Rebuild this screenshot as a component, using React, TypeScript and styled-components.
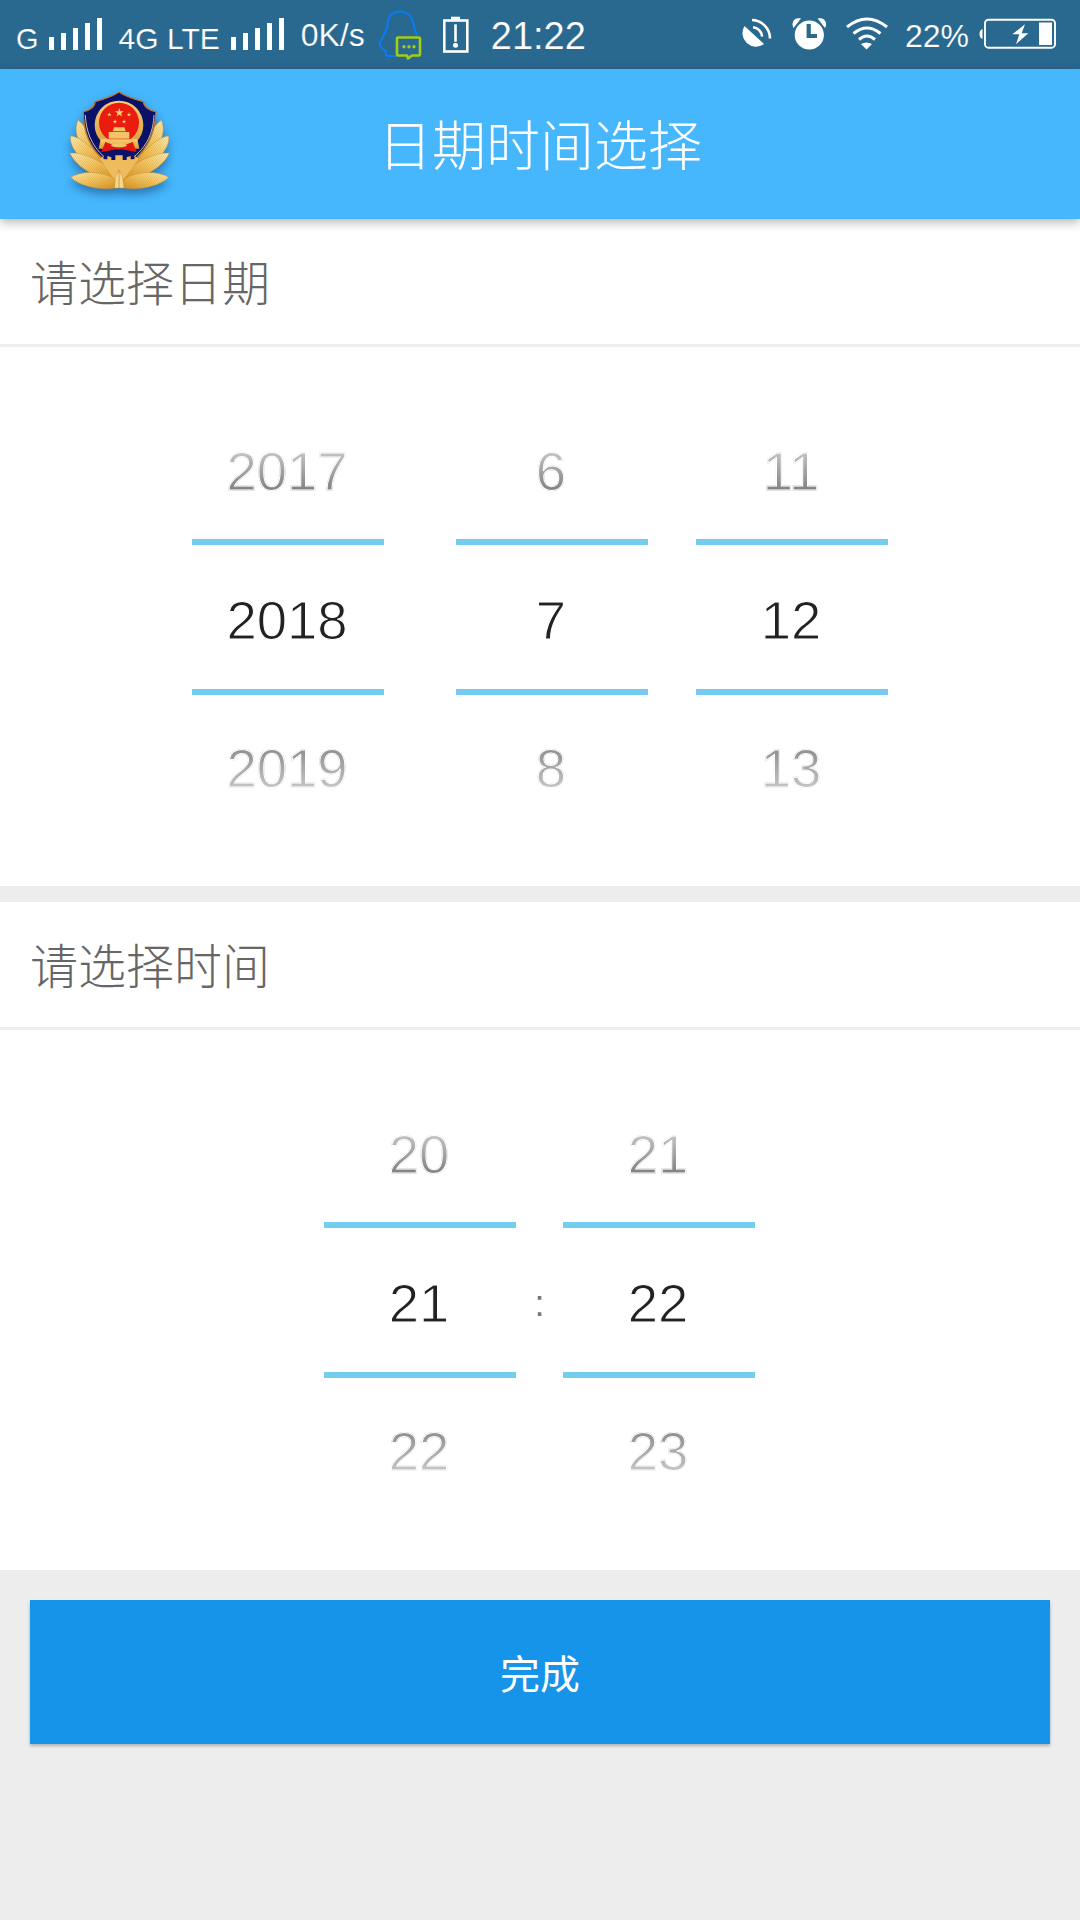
import React from "react";
import styled, { createGlobalStyle } from "styled-components";

const Global = createGlobalStyle`
  html, body { margin: 0; padding: 0; background: #ededed; }
  * { box-sizing: border-box; }
`;

const CJK = `"Noto Sans CJK SC", sans-serif`;
const BAR = "#29688f";

const Page = styled.div`
  width: 1080px;
  height: 1920px;
  background: #ededed;
  font-family: "Liberation Sans", "Noto Sans CJK SC", sans-serif;
  display: flex;
  flex-direction: column;
  overflow: hidden;
`;

const StatusBar = styled.div`
  height: 69px;
  background: ${BAR};
  color: #fff;
  display: flex;
  align-items: center;
  padding: 0 24px 0 16px;
`;

const StatusText = styled.span<{ $size: number; $left: number; $top: number }>`
  font-size: ${(p) => p.$size}px;
  margin-left: ${(p) => p.$left}px;
  margin-top: ${(p) => p.$top}px;
  line-height: 1;
  white-space: nowrap;
  -webkit-text-stroke: 0.2px ${BAR};
`;

const StatusIcon = styled.svg<{ $left: number; $auto?: boolean }>`
  margin-left: ${(p) => (p.$auto ? "auto" : `${p.$left}px`)};
  flex: none;
  display: block;
`;

const AppBar = styled.header`
  height: 150px;
  background: #46b7fd;
  box-shadow: 0 3px 10px rgba(0, 0, 0, 0.3);
  display: grid;
  grid-template-columns: 1fr auto 1fr;
  align-items: center;
  position: relative;
  z-index: 2;
`;

const Emblem = styled.svg`
  margin: 1px 0 0 50px;
  align-self: start;
  filter: drop-shadow(0 5px 5px rgba(0, 20, 70, 0.4));
`;

const AppTitle = styled.h1`
  margin: 0 0 4px;
  color: #fff;
  font-size: 54px;
  font-weight: 300;
  font-family: ${CJK};
`;

const Section = styled.section`
  background: #fff;
`;

const SectionHead = styled.div`
  height: 128px;
  display: flex;
  align-items: center;
  padding-left: 30px;
  padding-bottom: 4px;
  font-size: 48px;
  font-weight: 300;
  color: #666;
  border-bottom: 3px solid #eeeeee;
  font-family: ${CJK};
`;

const Pickers = styled.div<{ $h: number; $trim?: number }>`
  height: ${(p) => p.$h}px;
  display: flex;
  justify-content: center;
  align-items: flex-start;
  padding-top: 42px;
  padding-right: ${(p) => p.$trim ?? 0}px;
`;

const Column = styled.div`
  width: 192px;
  display: flex;
  flex-direction: column;
`;

const Cell = styled.div<{ $pos: "top" | "mid" | "bot" }>`
  height: ${(p) => (p.$pos === "mid" ? 156 : 150)}px;
  padding-top: ${(p) => (p.$pos === "top" ? 15 : p.$pos === "mid" ? 6 : 0)}px;
  padding-bottom: ${(p) => (p.$pos === "bot" ? 4 : 0)}px;
  padding-right: 2px;
  display: flex;
  align-items: center;
  justify-content: center;
  font-size: 54.5px;
  color: #222;
  -webkit-text-stroke: 1px #fff;
  border-top: ${(p) => (p.$pos === "mid" ? "6px solid #74cdf0" : "0")};
  border-bottom: ${(p) => (p.$pos === "mid" ? "6px solid #74cdf0" : "0")};
`;

const Faded = styled.span<{ $dir: "up" | "down" }>`
  background: linear-gradient(
    ${(p) => (p.$dir === "up" ? "180deg, #c8c8c8 15%, #7c7c7c 85%" : "180deg, #8c8c8c 15%, #c8c8c8 85%")}
  );
  -webkit-background-clip: text;
  background-clip: text;
  color: transparent;
`;

const Gap = styled.div<{ $w: number }>`
  width: ${(p) => p.$w}px;
`;

const Colon = styled.div`
  width: 47px;
  height: 150px;
  margin-top: 157px;
  display: flex;
  align-items: center;
  justify-content: center;
  font-size: 36px;
  color: #777;
`;

const Divider = styled.div`
  height: 16px;
`;

const DoneButton = styled.button`
  margin: 30px 30px 0;
  height: 144px;
  border: 0;
  padding: 0;
  background: #1594ea;
  color: #fff;
  font-size: 40px;
  font-weight: 400;
  font-family: ${CJK};
  box-shadow: 0 2px 3px rgba(0, 0, 0, 0.25);
`;

function Picker({ values }: { values: string[] }) {
  return (
    <Column>
      <Cell $pos="top"><Faded $dir="up">{values[0]}</Faded></Cell>
      <Cell $pos="mid">{values[1]}</Cell>
      <Cell $pos="bot"><Faded $dir="down">{values[2]}</Faded></Cell>
    </Column>
  );
}

function Bars({ left }: { left: number }) {
  return (
    <StatusIcon $left={left} width="53" height="69" viewBox="0 0 53 69" fill="#fff">
      <rect x="0" y="37" width="5" height="13" />
      <rect x="12" y="33" width="5" height="17" />
      <rect x="24" y="28" width="5" height="22" />
      <rect x="36" y="23" width="5" height="27" />
      <rect x="48" y="18" width="5" height="32" />
    </StatusIcon>
  );
}

function QQIcon() {
  return (
    <StatusIcon $left={12} width="46" height="69" viewBox="378 0 46 69" fill="none">
      <path
        d="M397.3 56 H388 C386.5 55 386.5 53 386.7 51 C384.5 50 381 46.5 380.7 43.3 C382 39 387 33 388.3 26.7 C388.5 17 393 11.7 400.5 11.7 C408.5 11.7 414 17 415 26.7 C415.5 30 417.5 33 418.3 36"
        stroke="#0a7bf0"
        strokeWidth="2.2"
        strokeLinejoin="round"
      />
      <path
        d="M399 37.5 H420 Q421 37.5 421 38.5 V54.5 Q421 55.5 420 55.5 H413 L409 58.5 L408 55.5 H399 Q398 55.5 398 54.5 V38.5 Q398 37.5 399 37.5 Z"
        fill={BAR}
        stroke="#a3cc17"
        strokeWidth="2.6"
        strokeLinejoin="round"
      />
      <circle cx="405" cy="46.7" r="1.7" fill="#a3cc17" />
      <circle cx="410" cy="46.7" r="1.7" fill="#a3cc17" />
      <circle cx="415" cy="46.7" r="1.7" fill="#a3cc17" />
    </StatusIcon>
  );
}

function BatteryAlert() {
  return (
    <StatusIcon $left={19} width="27" height="69" viewBox="443 0 27 69" fill="#fff">
      <rect x="445.3" y="20.5" width="23" height="31" fill="none" stroke="#fff" strokeWidth="2.6" />
      <rect x="452" y="16.7" width="9" height="3" />
      <rect x="455.2" y="24.3" width="2.6" height="17.4" />
      <circle cx="456.5" cy="45.2" r="2.5" />
    </StatusIcon>
  );
}

function RotateIcon() {
  return (
    <StatusIcon $auto $left={0} width="32" height="69" viewBox="741 0 32 69" fill="none">
      <path d="M745.5 26 A13.5 13.5 0 0 0 765 44 Z" fill="#fff" />
      <path d="M753 20 A18.5 18.5 0 0 1 771 38.5" stroke="#fff" strokeWidth="2.6" />
      <path d="M754 27.2 A10 10 0 0 1 763 36.5" stroke="#fff" strokeWidth="2.6" />
    </StatusIcon>
  );
}

function AlarmIcon() {
  return (
    <StatusIcon $left={20} width="35" height="69" viewBox="793 0 35 69" fill="#fff">
      <circle cx="810.3" cy="35" r="14.6" />
      <path d="M794.6 28 C791.5 22.5 795.5 16.5 802 18.6 Z" />
      <path d="M826 28 C829.1 22.5 825.1 16.5 818.6 18.6 Z" />
      <path d="M807.6 24 H811.8 V34 H818 V38 H807.6 Z" fill={BAR} />
    </StatusIcon>
  );
}

function WifiIcon() {
  return (
    <StatusIcon $left={18} width="45" height="69" viewBox="846 0 45 69" fill="none" stroke="#fff" strokeWidth="3">
      <path d="M848 27 Q868 11 888 27" />
      <path d="M854.5 33.5 Q868 22.5 881.5 33.5" />
      <path d="M860 39.5 Q868 32.5 876 39.5" />
      <path d="M862 44 Q867.5 41 873 44 L867.5 49.5 Z" fill="#fff" stroke="none" />
    </StatusIcon>
  );
}

function BatteryIcon() {
  return (
    <StatusIcon $left={10} width="77" height="69" viewBox="979 0 77 69" fill="#fff">
      <path d="M982.5 29 Q979.5 30 979.5 34 Q979.5 38 982.5 39 Z" />
      <rect x="985" y="19.7" width="70" height="28" rx="3.5" fill="none" stroke="#fff" strokeWidth="1.9" />
      <rect x="1039" y="22.5" width="13" height="22.5" />
      <path d="M1025 24.3 L1012.3 34.3 H1019.3 L1016 44.3 L1028.3 33.3 H1021.7 Z" />
    </StatusIcon>
  );
}

function star(cx: number, cy: number, r: number) {
  const pts: string[] = [];
  for (let i = 0; i < 10; i++) {
    const rad = i % 2 === 0 ? r : r * 0.4;
    const a = -Math.PI / 2 + (i * Math.PI) / 5;
    pts.push(`${(cx + rad * Math.cos(a)).toFixed(1)},${(cy + rad * Math.sin(a)).toFixed(1)}`);
  }
  return pts.join(" ");
}

const LEAVES = [
  "M160 280 C108 250 62 205 84 150 C114 172 140 225 160 280 Z",
  "M168 305 C108 288 56 240 62 198 C92 200 134 238 168 285 Z",
  "M198 330 C150 328 84 300 60 250 C100 244 168 278 198 314 Z",
  "M198 354 C150 362 92 350 62 322 C100 298 168 306 198 330 Z",
];

function Wing() {
  return (
    <g>
      {LEAVES.map((d) => (
        <g key={d}>
          <path d={d} fill="url(#goldLeaf)" stroke="#c98f35" strokeWidth="1.5" />
          <path d={d} fill="url(#hatch)" />
        </g>
      ))}
    </g>
  );
}

function PoliceEmblem() {
  return (
    <Emblem width="140" height="130" viewBox="0 0 420 390">
      <defs>
        <linearGradient id="goldLeaf" x1="0" y1="0" x2="1" y2="1">
          <stop offset="0" stopColor="#fff0b5" />
          <stop offset="0.5" stopColor="#f3c45c" />
          <stop offset="1" stopColor="#d68f22" />
        </linearGradient>
        <linearGradient id="goldRing" x1="0" y1="0" x2="0" y2="1">
          <stop offset="0" stopColor="#f6cf75" />
          <stop offset="1" stopColor="#dc9a35" />
        </linearGradient>
        <pattern id="hatch" width="5" height="5" patternUnits="userSpaceOnUse" patternTransform="rotate(35)">
          <rect width="2" height="5" fill="#b87c22" fillOpacity="0.3" />
        </pattern>
      </defs>
      <Wing />
      <g transform="translate(418 0) scale(-1 1)">
        <Wing />
      </g>
      <path
        d="M207 66 C190 78 160 88 135 95 C135 110 118 122 100 125 C100 170 110 225 160 268 L207 300 L254 268 C304 225 316 170 318 125 C298 122 282 110 280 95 C254 88 224 78 207 66 Z"
        fill="#0b1169"
        stroke="#b9772e"
        strokeWidth="4"
      />
      <path d="M106 135 C108 180 122 225 162 260" fill="none" stroke="#f4e2a8" strokeWidth="2.5" />
      <path d="M312 135 C310 180 296 225 252 260" fill="none" stroke="#f4e2a8" strokeWidth="2.5" />
      <circle cx="207" cy="165" r="73" fill="url(#goldRing)" />
      <circle cx="207" cy="158" r="60" fill="#ea1c10" />
      <polygon points={star(208, 128, 14)} fill="#f7d271" />
      <polygon points={star(178, 134, 7)} fill="#f7d271" />
      <polygon points={star(237, 134, 7)} fill="#f7d271" />
      <polygon points={star(195, 155, 7)} fill="#f7d271" />
      <polygon points={star(222, 155, 7)} fill="#f7d271" />
      <path d="M188 184 L192 172 H223 L227 184 Z" fill="#f3c568" />
      <rect x="176" y="186" width="62" height="20" fill="#f3c568" />
      <path d="M152 208 H262 L268 236 H146 Z" fill="url(#goldRing)" />
      <path d="M166 216 L154 246 L188 240 L207 236 L226 240 L260 246 L248 216 L207 232 Z" fill="#e5150e" />
      <ellipse cx="207" cy="226" rx="24" ry="6" fill="#f3c568" />
      <path
        d="M150 266 L160 258 V268 L172 268 V258 L184 262 V270 H196 V256 H218 V270 H230 V262 L242 258 V268 H254 V258 L266 266 L226 322 L207 338 L188 322 Z"
        fill="#eebc5c"
      />
      <path d="M196 322 L207 300 L218 322 L222 354 H194 Z" fill="#f7d88c" stroke="#c98f35" strokeWidth="1.5" />
      <path d="M207 300 V354" stroke="#b87c22" strokeWidth="2" />
    </Emblem>
  );
}

export default function App() {
  return (
    <Page>
      <Global />
      <StatusBar>
        <StatusText $size={29} $left={0} $top={9}>G</StatusText>
        <Bars left={10} />
        <StatusText $size={30} $left={17} $top={9}>4G LTE</StatusText>
        <Bars left={11} />
        <StatusText $size={32} $left={17} $top={1}>0K/s</StatusText>
        <QQIcon />
        <BatteryAlert />
        <StatusText $size={38} $left={22} $top={2}>21:22</StatusText>
        <RotateIcon />
        <AlarmIcon />
        <WifiIcon />
        <StatusText $size={32} $left={15} $top={2}>22%</StatusText>
        <BatteryIcon />
      </StatusBar>
      <AppBar>
        <PoliceEmblem />
        <AppTitle>日期时间选择</AppTitle>
      </AppBar>
      <Section>
        <SectionHead>请选择日期</SectionHead>
        <Pickers $h={539}>
          <Picker values={["2017", "2018", "2019"]} />
          <Gap $w={72} />
          <Picker values={["6", "7", "8"]} />
          <Gap $w={48} />
          <Picker values={["11", "12", "13"]} />
        </Pickers>
      </Section>
      <Divider />
      <Section>
        <SectionHead>请选择时间</SectionHead>
        <Pickers $h={540} $trim={1}>
          <Picker values={["20", "21", "22"]} />
          <Colon>:</Colon>
          <Picker values={["21", "22", "23"]} />
        </Pickers>
      </Section>
      <DoneButton>完成</DoneButton>
    </Page>
  );
}
